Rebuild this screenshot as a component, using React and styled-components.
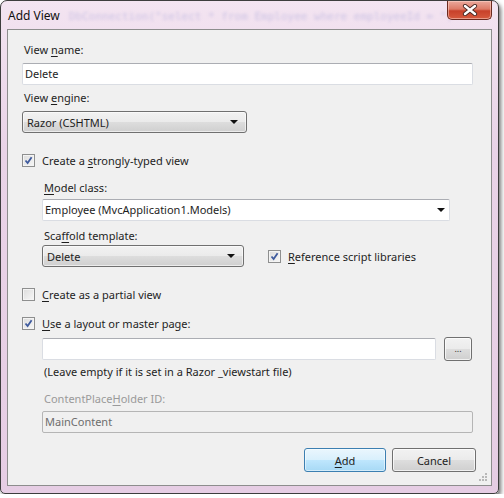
import React from 'react'
import styled, { createGlobalStyle } from 'styled-components'

const GlobalStyle = createGlobalStyle`
  html, body {
    margin: 0;
    padding: 0;
    background: #ffffff;
  }
  body {
    font-family: 'Noto Sans', 'Open Sans', sans-serif;
    font-size: 11px;
    color: #1e1e1e;
  }
`

const Window = styled.div`
  position: relative;
  width: 499px;
  height: 494px;
  box-sizing: border-box;
  border: 1px solid #3d3d3d;
  border-radius: 7px 7px 5px 5px;
  background: linear-gradient(180deg, #f3e4f1 0%, #e9d3e7 30%, #e6cde4 100%);
  box-shadow: 2px 3px 4px rgba(0, 0, 0, 0.55);
  padding: 0 6px 7px 6px;
  display: flex;
  flex-direction: column;
  overflow: hidden;
`

const TitleBar = styled.div`
  position: relative;
  height: 28px;
  display: flex;
  align-items: flex-start;
  justify-content: space-between;
`

const GhostText = styled.div`
  position: absolute;
  left: 62px;
  top: 9px;
  white-space: nowrap;
  font-family: 'DejaVu Sans Mono', monospace;
  font-size: 11px;
  color: rgba(110, 120, 200, 0.28);
  filter: blur(1.8px);
  pointer-events: none;
`

const Title = styled.div`
  position: relative;
  margin: 6px 0 0 1px;
  font-size: 12px;
  color: #111;
`

const CloseButton = styled.div`
  position: relative;
  width: 45px;
  height: 19px;
  box-sizing: border-box;
  border: 1px solid #6b2a1f;
  border-top: none;
  border-radius: 0 0 5px 5px;
  background: linear-gradient(180deg, #eba99c 0%, #dd7b67 45%, #c8412a 55%, #d65a3e 100%);
  box-shadow: inset 0 0 0 1px rgba(255, 220, 210, 0.5);
  display: flex;
  align-items: center;
  justify-content: center;
`

const Client = styled.div`
  flex: 1;
  box-sizing: border-box;
  border: 1px solid #8d8d8d;
  background: #f0f0f0;
  padding: 12px 0 0 14px;
  display: flex;
  flex-direction: column;
  position: relative;
`

const Label = styled.div`
  height: 15px;
  line-height: 15px;
  margin-top: ${p => p.$mt || 0}px;
  padding-left: 2px;
  color: ${p => (p.$disabled ? '#9a9a9a' : '#1e1e1e')};
  white-space: nowrap;
`

const Key = styled.span`
  text-decoration: underline;
  text-underline-offset: 2px;
`

const Indent = styled.div`
  padding-left: 20px;
  display: flex;
  flex-direction: column;
`

const TextBox = styled.div`
  width: ${p => p.$w}px;
  height: 22px;
  box-sizing: border-box;
  margin-top: ${p => p.$mt || 0}px;
  border: 1px solid #dadde3;
  border-top-color: #abadb3;
  border-radius: 2px;
  background: ${p => (p.$disabled ? '#f0f0f0' : '#ffffff')};
  color: ${p => (p.$disabled ? '#6d6d6d' : '#1e1e1e')};
  padding-left: 2px;
  line-height: 20px;
  display: flex;
  align-items: center;
  justify-content: space-between;
  ${p => p.$disabled && 'border-color: #b5b5b5;'}
`

const ComboBox = styled.div`
  width: ${p => p.$w}px;
  height: 22px;
  box-sizing: border-box;
  margin-top: ${p => p.$mt || 0}px;
  border: 1px solid #707070;
  border-radius: 3px;
  background: linear-gradient(180deg, #f2f2f2 0%, #ebebeb 48%, #dddddd 52%, #cfcfcf 100%);
  box-shadow: inset 0 0 0 1px rgba(255, 255, 255, 0.6);
  padding: 0 8px 0 4px;
  display: flex;
  align-items: center;
  justify-content: space-between;
`

const Arrow = styled.span`
  width: 0;
  height: 0;
  border-left: 4px solid transparent;
  border-right: 4px solid transparent;
  border-top: 4px solid #111;
  margin-right: ${p => p.$mr || 0}px;
`

const CheckRow = styled.label`
  display: flex;
  align-items: center;
  gap: 7px;
  height: 15px;
  margin-top: ${p => p.$mt || 0}px;
  margin-left: ${p => p.$ml || 0}px;
  white-space: nowrap;
`

const Box = styled.span`
  width: 13px;
  height: 13px;
  box-sizing: border-box;
  border: 1px solid #8e8f8f;
  background: linear-gradient(135deg, #dcdcdc 0%, #f7f7f7 100%);
  box-shadow: inset 0 0 0 1px #f4f4f4;
  display: flex;
  align-items: center;
  justify-content: center;
`

const Row = styled.div`
  display: flex;
  align-items: center;
  margin-top: ${p => p.$mt || 0}px;
`

const SmallButton = styled.div`
  width: 28px;
  height: 24px;
  box-sizing: border-box;
  margin-left: 8px;
  border: 1px solid #707070;
  border-radius: 3px;
  background: linear-gradient(180deg, #f2f2f2 0%, #ebebeb 48%, #dddddd 52%, #cfcfcf 100%);
  box-shadow: inset 0 0 0 1px rgba(255, 255, 255, 0.7);
  font-size: 9px;
  display: flex;
  align-items: center;
  justify-content: center;
  padding-bottom: 2px;
  color: #333;
`

const Footer = styled.div`
  display: flex;
  justify-content: flex-end;
  gap: 6px;
  margin-top: 15px;
  padding-right: 15px;
`

const Button = styled.div`
  width: ${p => p.$w}px;
  height: 24px;
  box-sizing: border-box;
  border: 1px solid ${p => (p.$default ? '#3c7fb1' : '#707070')};
  border-radius: 3px;
  background: ${p =>
    p.$default
      ? 'linear-gradient(180deg, #eaf6fd 0%, #d9f0fc 48%, #bee6fd 52%, #a7d9f5 100%)'
      : 'linear-gradient(180deg, #f2f2f2 0%, #ebebeb 48%, #dddddd 52%, #cfcfcf 100%)'};
  box-shadow: inset 0 0 0 1px ${p => (p.$default ? 'rgba(255,255,255,0.5)' : 'rgba(255,255,255,0.7)')};
  display: flex;
  align-items: center;
  justify-content: center;
  color: #1e1e1e;
`

const Grip = styled.svg`
  position: absolute;
  right: 4px;
  bottom: 4px;
`

const Check = () => (
  <svg width="9" height="9" viewBox="0 0 9 9">
    <path d="M1.5 4.5 L3.6 7 L7.6 1.2" fill="none" stroke="#3f5b9e" strokeWidth="1.8" />
  </svg>
)

const CheckBox = ({ checked, children, ...rest }) => (
  <CheckRow {...rest}>
    <Box>{checked && <Check />}</Box>
    <span>{children}</span>
  </CheckRow>
)

const App = () => (
  <>
    <GlobalStyle />
    <Window>
      <TitleBar>
        <GhostText>{'DbConnection("select * from Employee where employeeId = ")'}</GhostText>
        <Title>Add View</Title>
        <CloseButton>
          <svg width="16" height="12" viewBox="0 0 16 12">
            <path d="M3 2 L13 10 M13 2 L3 10" stroke="#4a2a24" strokeWidth="4.2" strokeLinecap="round" />
            <path d="M3 2 L13 10 M13 2 L3 10" stroke="#ffffff" strokeWidth="2.4" strokeLinecap="round" />
          </svg>
        </CloseButton>
      </TitleBar>
      <Client>
        <Label>
          View <Key>n</Key>ame:
        </Label>
        <TextBox $w={451} $mt={6}>Delete</TextBox>
        <Label $mt={5}>
          View <Key>e</Key>ngine:
        </Label>
        <ComboBox $w={225} $mt={6}>
          <span>Razor (CSHTML)</span>
          <Arrow />
        </ComboBox>
        <CheckBox checked $mt={20}>
          Create a <Key>s</Key>trongly-typed view
        </CheckBox>
        <Indent>
          <Label $mt={12}>
            <Key>M</Key>odel class:
          </Label>
          <TextBox $w={408} $mt={4}>
            <span>Employee (MvcApplication1.Models)</span>
            <Arrow $mr={4} />
          </TextBox>
          <Label $mt={7}>
            Sca<Key>f</Key>fold template:
          </Label>
          <Row $mt={2}>
            <ComboBox $w={202}>
              <span>Delete</span>
              <Arrow />
            </ComboBox>
            <CheckBox checked $ml={24}>
              <Key>R</Key>eference script libraries
            </CheckBox>
          </Row>
        </Indent>
        <CheckBox $mt={20}>
          <Key>C</Key>reate as a partial view
        </CheckBox>
        <CheckBox checked $mt={14}>
          <Key>U</Key>se a layout or master page:
        </CheckBox>
        <Indent>
          <Row $mt={6}>
            <TextBox $w={394} />
            <SmallButton>...</SmallButton>
          </Row>
          <Label $mt={3}>(Leave empty if it is set in a Razor _viewstart file)</Label>
          <Label $mt={12} $disabled>
            ContentPlace<Key>H</Key>older ID:
          </Label>
          <TextBox $w={431} $mt={5} $disabled>
            MainContent
          </TextBox>
        </Indent>
        <Footer>
          <Button $w={82} $default>
            <span>
              <Key>A</Key>dd
            </span>
          </Button>
          <Button $w={84}>Cancel</Button>
        </Footer>
        <Grip width="8" height="8" viewBox="0 0 8 8">
          {[
            [6, 0],
            [6, 3],
            [3, 3],
            [6, 6],
            [3, 6],
            [0, 6]
          ].map(([x, y]) => (
            <rect key={`${x}-${y}`} x={x} y={y} width="2" height="2" fill="#b8b8b8" />
          ))}
        </Grip>
      </Client>
    </Window>
  </>
)

export default App
